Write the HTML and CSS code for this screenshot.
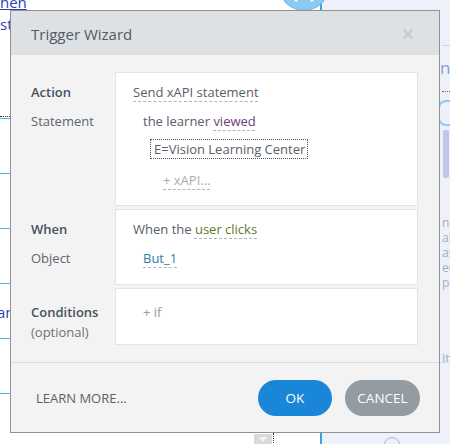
FILE: index.html
```html
<!DOCTYPE html>
<html>
<head>
<meta charset="utf-8">
<link rel="stylesheet" href="styles.css">
</head>
<body>
<div class="backdrop">
  <div class="bg-right">
    <div class="bg-right-line"></div>
    <div class="bg-right-n">n</div>
    <div class="bg-right-dots"></div>
    <div class="bg-right-shape"></div>
    <div class="bg-right-bar"></div>
    <div class="bg-right-text">
      <div class="bg-tl">nit</div>
      <div class="bg-tl">ab</div>
      <div class="bg-tl">as</div>
      <div class="bg-tl">ec</div>
      <div class="bg-tl">pro</div>
    </div>
    <div class="bg-right-ity">ity</div>
    <div class="bg-right-sep"></div>
    <div class="bg-right-globe"></div>
  </div>
  <div class="bg-circle">
    <svg width="48" height="48" viewBox="0 0 48 48"><path d="M15 21 L33 39 M33 21 L15 39" stroke="#fff" stroke-width="3" fill="none"/></svg>
  </div>
  <div class="bg-link-a">hen</div>
  <div class="bg-link-b">st</div>
  <div class="bg-dots"></div>
  <div class="bg-line" style="top:118px"></div>
  <div class="bg-line" style="top:173px"></div>
  <div class="bg-line" style="top:228px"></div>
  <div class="bg-line" style="top:283px"></div>
  <div class="bg-line" style="top:338px"></div>
  <div class="bg-line" style="top:393px"></div>
  <div class="bg-link-c">an</div>
  <div class="bg-select"><span class="bg-tri"></span></div>
  <div class="bg-vdots"></div>
</div>

<div class="dialog">
  <div class="dlg-head">
    <span class="dlg-title">Trigger Wizard</span>
    <svg class="dlg-close" width="12" height="12" viewBox="0 0 12 12"><path d="M1.5 1.5 L10.5 10.5 M10.5 1.5 L1.5 10.5" stroke="#c9c9c9" stroke-width="2.4" fill="none"/></svg>
  </div>
  <div class="dlg-body">
    <div class="section">
      <div class="labels">
        <div class="lbl strong first">Action</div>
        <div class="lbl">Statement</div>
      </div>
      <div class="box box-action">
        <div class="row"><span class="dash">Send xAPI statement</span></div>
        <div class="row r2 in1">the learner <span class="dash verb">viewed</span></div>
        <div class="row-obj"><span class="objbox">E=Vision Learning Center</span></div>
        <div class="row r4 in2"><span class="dash muted">+ xAPI...</span></div>
      </div>
    </div>
    <div class="section">
      <div class="labels">
        <div class="lbl strong first">When</div>
        <div class="lbl">Object</div>
      </div>
      <div class="box box-when">
        <div class="row">When the <span class="dash green">user clicks</span></div>
        <div class="row r2 in1"><span class="dash teal">But_1</span></div>
      </div>
    </div>
    <div class="section">
      <div class="labels">
        <div class="lbl strong cond">Conditions</div>
        <div class="lbl opt">(optional)</div>
      </div>
      <div class="box box-cond">
        <div class="row in1 muted2">+ if</div>
      </div>
    </div>
  </div>
  <div class="dlg-foot">
    <span class="learn">LEARN MORE...</span>
    <div class="btns">
      <button class="btn btn-ok">OK</button>
      <button class="btn btn-cancel">CANCEL</button>
    </div>
  </div>
</div>
</body>
</html>
```

FILE: styles.css
```css
html, body {
  margin: 0;
  padding: 0;
}
body {
  width: 450px;
  height: 444px;
  overflow: hidden;
  background: #ffffff;
  position: relative;
  font-family: "Open Sans", "Noto Sans", sans-serif;
  font-size: 13px;
  color: #56606a;
}

/* ---------- backdrop (app behind modal) ---------- */
.backdrop {
  position: absolute;
  inset: 0;
}
.bg-right {
  position: absolute;
  left: 320px;
  top: 0;
  width: 130px;
  height: 444px;
  background: #eef1f9;
  border-left: 2px solid #3ea2de;
}
.bg-right-line {
  position: absolute;
  left: 120px;
  top: 45px;
  width: 12px;
  height: 1px;
  background: #c9dcef;
}
.bg-right-n {
  position: absolute;
  left: 118px;
  top: 56px;
  font-size: 17px;
  color: #8c9fcf;
}
.bg-right-dots {
  position: absolute;
  left: 120px;
  top: 91px;
  width: 12px;
  border-top: 1px dotted #667;
}
.bg-right-shape {
  position: absolute;
  left: 116px;
  top: 100px;
  width: 16px;
  height: 22px;
  border: 2px solid #8ecaf0;
  border-radius: 8px;
}
.bg-right-bar {
  position: absolute;
  left: 121px;
  top: 130px;
  width: 6px;
  height: 48px;
  background: #c3c6e6;
  border-radius: 2px;
}
.bg-right-text {
  position: absolute;
  left: 120px;
  top: 215px;
  display: flex;
  flex-direction: column;
}
.bg-tl {
  height: 15px;
  font-size: 12px;
  line-height: 15px;
  color: #a3abc9;
  overflow: hidden;
}
.bg-right-ity {
  position: absolute;
  left: 120px;
  top: 349px;
  font-size: 13px;
  color: #a3abc9;
}
.bg-right-sep {
  position: absolute;
  left: 118px;
  top: 362px;
  width: 14px;
  height: 1px;
  background: #d6dde8;
}
.bg-right-globe {
  position: absolute;
  left: 62px;
  top: 437px;
  width: 14px;
  height: 14px;
  border: 1px solid #a8b6cf;
  border-radius: 50%;
}
.bg-circle {
  position: absolute;
  left: 280px;
  top: -38px;
  width: 48px;
  height: 48px;
  border-radius: 50%;
  background: #8ccbef;
  box-shadow: 0 0 0 1px #6db9e6;
}
.bg-circle svg {
  display: block;
}
.bg-link-a {
  position: absolute;
  left: 0;
  top: -8px;
  font-size: 15px;
  color: #2c3fb3;
  text-decoration: underline;
}
.bg-link-b {
  position: absolute;
  left: 0;
  top: 14px;
  font-size: 15px;
  color: #2c3fb3;
}
.bg-link-c {
  position: absolute;
  left: -3px;
  top: 302px;
  font-size: 15px;
  color: #2c3fb3;
}
.bg-dots {
  position: absolute;
  left: 0;
  top: 116px;
  width: 10px;
  border-top: 1px dotted #333;
}
.bg-line {
  position: absolute;
  left: 0;
  width: 10px;
  height: 1px;
  background: #5ab1e4;
}
.bg-select {
  position: absolute;
  left: 254px;
  top: 434px;
  width: 18px;
  height: 14px;
  background: #d9d9d9;
}
.bg-tri {
  position: absolute;
  left: 5px;
  top: 3px;
  border-left: 4px solid transparent;
  border-right: 4px solid transparent;
  border-top: 5px solid #f4f4f4;
}
.bg-vdots {
  position: absolute;
  left: 273px;
  top: 433px;
  height: 12px;
  border-left: 1px dotted #333;
}

/* ---------- dialog ---------- */
.dialog {
  position: absolute;
  left: 10px;
  top: 10px;
  width: 428px;
  background: #f3f3f3;
  border: 1px solid #929292;
}
.dlg-head {
  height: 44px;
  background: #dee1e4;
  display: flex;
  align-items: center;
  justify-content: space-between;
  padding: 0 25px 0 20px;
}
.dlg-title {
  font-size: 15px;
  color: #4f5b66;
  margin-top: 1px;
}
.dlg-close {
  display: block;
  margin-top: 1px;
}
.dlg-body {
  padding: 17px 20px 17px 20px;
  display: flex;
  flex-direction: column;
  gap: 3px;
}
.section {
  display: grid;
  grid-template-columns: 84px 303px;
}
.lbl {
  line-height: 28px;
  color: #5d666e;
  margin-top: 1px;
}
.lbl.strong {
  font-weight: 600;
  color: #47525c;
}
.lbl.first {
  margin-top: 6px;
}
.lbl.cond {
  margin-top: 10px;
}
.lbl.opt {
  line-height: 14px;
  margin-top: -1px;
  color: #6a7279;
}
.box {
  background: #ffffff;
  border: 1px solid #e2e5e8;
  padding-left: 17px;
}
.box-action {
  padding-top: 5px;
  padding-bottom: 11px;
}
.box-when {
  padding-top: 5px;
  padding-bottom: 12px;
}
.box-cond {
  padding-top: 9px;
  padding-bottom: 18px;
}
.row {
  line-height: 28px;
  white-space: nowrap;
}
.row.r2 {
  margin-top: 1px;
}
.row.r4 {
  margin-top: 7px;
}
.in1 {
  padding-left: 10px;
}
.in2 {
  padding-left: 30px;
}
.row-obj {
  margin-top: 4px;
  padding-left: 17px;
  height: 20px;
}
.objbox {
  display: inline-block;
  border: 1px dotted #555;
  padding: 0 2px 0 3px;
  line-height: 18px;
  color: #56606a;
}
.dash {
  text-decoration: underline dashed #b5b5b5;
  text-decoration-thickness: 1px;
  text-underline-offset: 4px;
}
.verb {
  color: #6c3d78;
}
.green {
  color: #5f7a2f;
}
.teal {
  color: #2d7ea4;
}
.muted {
  color: #ababab;
}
.muted2 {
  color: #9a9a9a;
}

/* ---------- footer ---------- */
.dlg-foot {
  border-top: 1px solid #d5dde5;
  padding: 17px 19px 16px 25px;
  display: flex;
  align-items: center;
  justify-content: space-between;
}
.learn {
  color: #58626b;
  font-size: 13px;
}
.btns {
  display: flex;
  gap: 13px;
}
.btn {
  height: 36px;
  border: none;
  border-radius: 18px;
  font-family: "Open Sans", "Noto Sans", sans-serif;
  font-size: 13.5px;
  color: #ffffff;
  padding: 0;
  cursor: pointer;
}
.btn-ok {
  width: 74px;
  background: #1a86d7;
}
.btn-cancel {
  width: 75px;
  background: #939ba3;
}
```
